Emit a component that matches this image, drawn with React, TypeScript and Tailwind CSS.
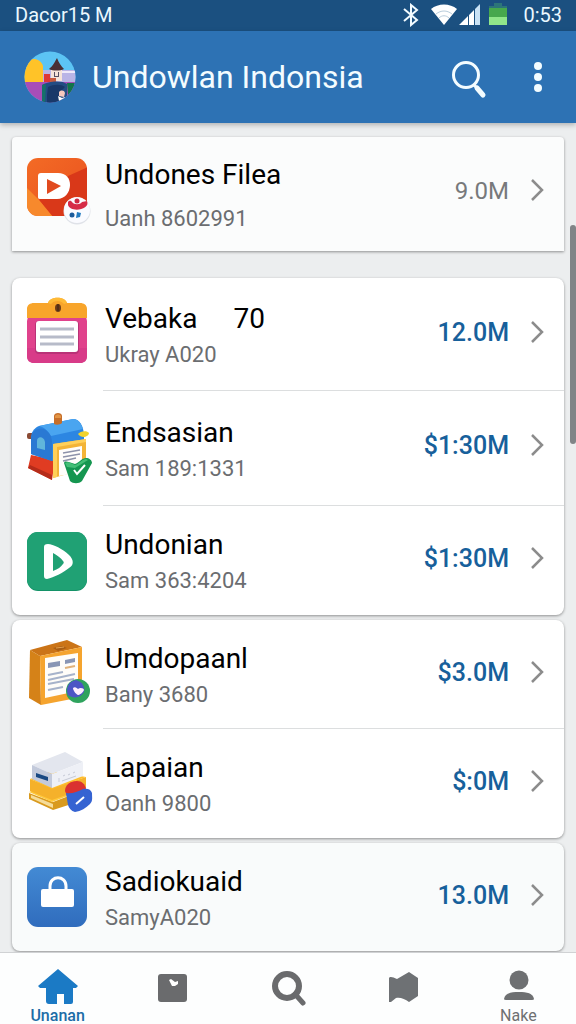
import type { ReactNode } from 'react';

const Avatar = () => (
  <svg viewBox="0 0 52 52" className="h-[52px] w-[52px] shrink-0" aria-hidden="true">
    <defs>
      <clipPath id="avatar-clip">
        <circle cx="26" cy="26" r="25.5" />
      </clipPath>
    </defs>
    <g clipPath="url(#avatar-clip)">
      <rect width="52" height="52" fill="#5cc4f4" />
      <path d="M18 19h34v12H18z" fill="#b9b4e6" />
      <path d="M38 20h14v2H38z" fill="#eee9fa" />
      <rect y="31" width="52" height="21" fill="#a74db8" />
      <path d="M0 31V16C2 6 16 5 19 15v16z" fill="#ffc328" />
      <path d="M27 17h11v13H27z" fill="#f5e4da" />
      <path d="M25 18c4-3 5-6 8-11 2 5 4 8 7 11-4 2-11 2-15 0z" fill="#4a3035" />
      <path d="M30 21h1v4h3v-4h1v5h-5z" fill="#555063" />
      <path d="M20 23h6v8h-6z" fill="#de3737" />
      <path d="M26 27h6v4h-6z" fill="#c65a3f" />
      <path d="M18 34c6-4 20-5 25-1v20H18z" fill="#234c83" />
      <path d="M24 36c6-3 13-3 17 0l-5 5 1 11H23v-8z" fill="#193869" />
      <path d="M18 34l4-1-1 19h-3z" fill="#15706a" />
      <path d="M43 32h9v20H40l4-8z" fill="#12744b" />
      <path d="M35 41c2-2 5-2 6 1l-1 4-5-1z" fill="#f6c8bd" />
      <path d="M34 45l4 2 3-1-1 4h-5z" fill="#fff" />
    </g>
  </svg>
);

const Art = ({ children }: { children: ReactNode }) => (
  <svg viewBox="0 0 72 80" className="h-20 w-[72px] shrink-0" aria-hidden="true">
    {children}
  </svg>
);

const FilesArt = () => (
  <Art>
    <defs>
      <linearGradient id="files-bg" x1="0" y1="0" x2="1" y2="1">
        <stop offset="0" stopColor="#f36b25" />
        <stop offset="1" stopColor="#e9501f" />
      </linearGradient>
      <clipPath id="files-clip">
        <rect x="5" y="4" width="60" height="58" rx="11" />
      </clipPath>
    </defs>
    <g clipPath="url(#files-clip)">
      <rect x="5" y="4" width="60" height="58" fill="url(#files-bg)" />
      <path d="M46 22l20-9v50H31L17 46z" fill="#d93819" />
      <path d="M5 34l12 12 14 17H5z" fill="#f7892c" />
    </g>
    <path d="M19 19h17c8 0 12 5 12 12s-5 14-13 14H18c-2 0-2-1-2-3V22c0-2 1-3 3-3z" fill="#fff" />
    <path d="M25 25l14 7-14 8z" fill="#e14a1f" />
    <circle cx="55" cy="57" r="13.5" fill="#dfe2e8" />
    <circle cx="55" cy="56" r="13" fill="#fafbff" />
    <path d="M46 48c2-2 3-1 4 0 2 3 8 3 10 0l5-1c4 9-17 12-19 4z" fill="#d62c48" />
    <circle cx="55" cy="47" r="2.5" fill="#ce2942" />
    <circle cx="50" cy="61" r="2.5" fill="#1b5b9b" />
    <path d="M55 58l4 1-1 4-4 1z" fill="#237bc0" />
  </Art>
);

const ClipboardArt = () => (
  <Art>
    <rect x="5" y="20" width="60" height="49" rx="7" fill="#e0428c" />
    <path d="M5 54v8c0 5 3 7 7 7h46c4 0 7-2 7-7v-8z" fill="#d83b88" />
    <path d="M5 24V15c0-4 3-6 7-6h14c2-7 17-7 19 0h13c4 0 7 2 7 6v9z" fill="#f8a52b" />
    <path d="M26 9c2-7 17-7 19 0l-3 1c-3-4-10-4-13 0z" fill="#ffba36" />
    <ellipse cx="36" cy="14" rx="3" ry="4" fill="#6d3b18" />
    <path d="M36 10v7" stroke="#3b2515" strokeWidth="1" />
    <rect x="13" y="27" width="44" height="33" rx="4" fill="#b93277" />
    <rect x="14" y="27" width="42" height="31" rx="3" fill="#fff" />
    <path d="M18 35h34M18 43h34M18 50h34" stroke="#b7bbc9" strokeWidth="3" />
  </Art>
);

const MailboxArt = () => (
  <Art>
    <path d="M9 47l-3 13 24 12 3-20z" fill="#e03c22" />
    <path d="M6 60l24 12v-5L8 57z" fill="#b52c1a" />
    <rect x="5" y="25" width="8" height="6" rx="2" fill="#8b4b34" />
    <path d="M9 31c0-7 3-11 8-13l34-7c7 0 10 7 11 15v18l-32 9-21-7z" fill="#2c86e2" />
    <path d="M17 18l34-7c5 0 8 4 10 10l-32 7c-3-5-7-9-12-10z" fill="#4aa5f0" />
    <path d="M9 31c1-15 20-14 21 3v19L9 46z" fill="#2a79d3" />
    <path d="M15 33c0-5 7-5 8 1v8l-8-2z" fill="#60b5db" />
    <path d="M32 8c0-4 8-4 8 0v7c-2 2-6 2-8 1z" fill="#c66e29" />
    <path d="M33 8c1-2 5-2 6 0v2h-6z" fill="#e39545" />
    <path d="M31 36l33-5v30l-33 9z" fill="#f3b437" />
    <path d="M31 36l33-5v3l-29 5v30l-4 1z" fill="#ffd05a" />
    <path d="M37 42l23-4v26l-23 4z" fill="#fffdfa" />
    <path d="M41 45l17-3M41 49l17-3M41 53l13-3" stroke="#8d92a9" strokeWidth="1.5" />
    <path d="M56 26c2-3 9-4 11-1 0 4-8 6-11 1z" fill="#f0d22d" />
    <path d="M42 55c1-3 4-1 11 1 5-2 7-6 11-6 3 0 6 2 6 5L60 73c-3 3-9 3-12 0z" fill="#159650" />
    <path d="M43 55c3-2 6 0 10 2 5-2 8-6 11-6l2 1-13 8-8-1z" fill="#43be75" />
    <path d="M52 62l3 4 8-9" fill="none" stroke="#fff" strokeWidth="2" />
  </Art>
);

const PlayArt = () => (
  <Art>
    <rect x="5" y="12" width="60" height="59" rx="11" fill="#149267" />
    <rect x="5" y="12" width="60" height="58" rx="11" fill="#20a174" />
    <path
      fillRule="evenodd"
      d="M26 24c5 0 15 5 21 11 5 5 5 10 0 13-6 5-15 9-22 11-2 0-3-1-3-3V27c0-2 1-3 4-3zM31 33v18c5-2 8-4 10-7 1-1 1-2 0-3-2-3-6-6-10-8z"
      fill="#fff"
    />
  </Art>
);

const BoxArt = () => (
  <Art>
    <path d="M8 16l37-10 15 7-42 9z" fill="#cb7417" />
    <path d="M8 16l10 6 1 49L7 64z" fill="#d58218" />
    <path d="M18 22l42-9v50l-41 8z" fill="#f5a42e" />
    <path d="M31 14l9-2 5 2-9 3z" fill="#a85e15" />
    <path d="M34 14l8-1" stroke="#e6a14b" />
    <path d="M23 24l33-5v38l-33 7z" fill="#fffdf8" />
    <path d="M26 29l12-2v5l-12 2zM43 26l10-2v4l-10 2z" fill="#8996b4" />
    <path d="M43 34l10-2" stroke="#e0b27a" strokeWidth="2" />
    <path d="M26 41l15-3M26 46l27-6M26 50l26-5M26 56l15-3" stroke="#a7b3ca" strokeWidth="2" />
    <circle cx="56" cy="57" r="12" fill="#2fa35e" />
    <path d="M54 46c-7 1-11 8-8 15 5 4 13 3 16-3 1-5-1-10-8-12z" fill="#4d55c5" />
    <path d="M51 54c2-2 4 0 5 1 2-2 6-1 6 1-1 3-5 5-6 5s-5-4-5-7z" fill="#fff0ff" />
  </Art>
);

const BooksArt = () => (
  <Art>
    <path d="M7 50l24 9 34-13v10L31 67 7 56z" fill="#d99a1e" />
    <path d="M7 49l22-8 35 5-34 13z" fill="#ffc93d" />
    <path d="M9 52l22 9v4L9 55z" fill="#f5dc9a" />
    <path d="M8 36l22 9 34-11v11L30 57 8 48z" fill="#f5b12b" />
    <path d="M8 36l22-8 34 6-34 12z" fill="#ffbd29" />
    <path d="M10 22l33-13 18 10-31 12z" fill="#e3e6ee" />
    <path d="M10 22l20 9v14l-20-9z" fill="#c3cadb" />
    <path d="M30 31l31-12v14L30 45z" fill="#eef0f6" />
    <path d="M14 30l12 4v4l-12-4z" fill="#194983" />
    <path d="M37 35v4M41 33l2-1M46 32l2-1M51 30l2-1M40 38l14-5" stroke="#c6cad6" strokeWidth="1" />
    <path d="M43 48c0-6 5-10 12-10 5 0 8 3 9 8l-19 7z" fill="#da3230" />
    <path d="M44 50c6 1 11-1 17-4 4-1 8 0 9 4 0 5 1 8-2 11-4 4-9 7-15 8-4-1-6-4-7-7z" fill="#3563d2" />
    <path d="M54 61l8-7" fill="none" stroke="#fff" strokeWidth="2" />
  </Art>
);

const BagArt = () => (
  <Art>
    <defs>
      <linearGradient id="bag-bg" x1="0" y1="0" x2="0" y2="1">
        <stop offset="0" stopColor="#438ad4" />
        <stop offset="1" stopColor="#306cbd" />
      </linearGradient>
    </defs>
    <rect x="5" y="10" width="60" height="60" rx="11" fill="url(#bag-bg)" />
    <rect x="19" y="32" width="33" height="18" rx="2" fill="#fff" />
    <path d="M28 33v-4c0-11 16-11 16 0v4" fill="none" stroke="#fff" strokeWidth="3" />
  </Art>
);

type Item = {
  title: string;
  extra?: string;
  sub: string;
  amount: string;
  art: ReactNode;
  height: string;
  muted?: boolean;
};

type Group = { className: string; items: Item[] };

const groups: Group[] = [
  {
    className: 'mb-[27px] rounded-t bg-[#fbfcfc]',
    items: [
      { title: 'Undones Filea', sub: 'Uanh 8602991', amount: '9.0M', art: <FilesArt />, height: 'h-[114px]', muted: true },
    ],
  },
  {
    className: 'mb-[5px] rounded-lg bg-white',
    items: [
      { title: 'Vebaka', extra: '70', sub: 'Ukray A020', amount: '12.0M', art: <ClipboardArt />, height: 'h-28' },
      { title: 'Endsasian', sub: 'Sam 189:1331', amount: '$1:30M', art: <MailboxArt />, height: 'h-[115px]' },
      { title: 'Undonian', sub: 'Sam 363:4204', amount: '$1:30M', art: <PlayArt />, height: 'h-[110px]' },
    ],
  },
  {
    className: 'mb-[5px] rounded-lg bg-white',
    items: [
      { title: 'Umdopaanl', sub: 'Bany 3680', amount: '$3.0M', art: <BoxArt />, height: 'h-[108px]' },
      { title: 'Lapaian', sub: 'Oanh 9800', amount: '$:0M', art: <BooksArt />, height: 'h-[110px]' },
    ],
  },
  {
    className: 'rounded-lg bg-[#f9fbfb]',
    items: [
      { title: 'Sadiokuaid', sub: 'SamyA020', amount: '13.0M', art: <BagArt />, height: 'h-[108px]' },
    ],
  },
];

const Row = ({ item, divided }: { item: Item; divided: boolean }) => (
  <li>
    <button type="button" className={`flex w-full items-center pl-[10px] text-left ${item.height}`}>
      {item.art}
      <span
        className={`ml-[9px] flex h-full min-w-0 flex-1 items-center border-t pr-[19px] ${
          divided ? 'border-[#dcdedf]' : 'border-transparent'
        }`}
      >
        <span className={`flex flex-1 flex-col pl-[2px] ${item.muted ? 'gap-2 pt-1' : 'pt-[5px]'}`}>
          <span className="flex gap-9 text-[28px] leading-9 text-black">
            {item.title}
            {item.extra && <span>{item.extra}</span>}
          </span>
          <span className="text-[22px] leading-9 text-[#6b6d70]">{item.sub}</span>
        </span>
        <span className={`flex items-center ${item.muted ? 'pb-2' : 'pb-1'}`}>
          <span className={item.muted ? 'text-2xl text-[#77797b]' : 'text-[25px] font-medium text-[#17609b]'}>
            {item.amount}
          </span>
          <svg viewBox="0 0 16 24" className="mb-[2px] ml-5 h-6 w-4" fill="none" stroke="#8c8c8c" strokeWidth="2.5" aria-hidden="true">
            <path d="M3 2l10 10L3 22" />
          </svg>
        </span>
      </span>
    </button>
  </li>
);

const StatusBar = () => (
  <div className="flex h-[31px] shrink-0 items-center bg-[#1b5080] pr-[14px] pb-[2px] pl-[15px] text-xl leading-7 text-[#eaf8ff]">
    <span className="flex-1">Dacor15 M</span>
    <svg viewBox="0 0 16 24" className="h-6 w-4" fill="none" stroke="#f2fbff" strokeWidth="2" aria-hidden="true">
      <path d="M1 6l13 11-6 5V2l6 5L1 18" />
    </svg>
    <svg viewBox="0 0 28 22" className="ml-[11px] h-[22px] w-7" aria-hidden="true">
      <path d="M1 5C8-1 20-1 27 5L14 21z" fill="#fff" />
      <path d="M6 10c5-4 11-4 16 0M9 14c3-3 7-3 10 0" fill="none" stroke="#b9cddc" strokeWidth="1" />
    </svg>
    <svg viewBox="0 0 22 22" className="ml-px h-[22px] w-[22px]" aria-hidden="true">
      <path d="M0 21L9 12v9zM10 11l5-5v15h-5z" fill="#fff" />
      <path d="M16 5l5-5v21h-5z" fill="#c9e2f5" />
    </svg>
    <svg viewBox="0 0 18 23" className="ml-2 h-[23px] w-[18px]" aria-hidden="true">
      <path d="M5 0h8v3h5v5H0V3h5z" fill="#2c7579" />
      <path d="M0 5h18v9H0z" fill="#47a84d" />
      <path d="M0 14h18v8H0z" fill="#91e68a" />
    </svg>
    <span className="ml-4">0:53</span>
  </div>
);

const tabs = [
  {
    name: 'Unanan',
    label: true,
    icon: <path d="M20 1l20 17-2 2h-3v14q0 2-2 2h-7V26h-7v10h-8q-3 0-3-3V20H2l-2-2z" fill="#1b7ac5" />,
  },
  {
    name: 'Calendar',
    icon: (
      <>
        <rect x="5" y="6" width="29" height="28" rx="3" fill="#6a6b6d" />
        <path d="M16 12l2-1 4 3 3-1v3l-3 2h-3z" fill="#fff" />
      </>
    ),
  },
  {
    name: 'Search',
    icon: (
      <>
        <circle cx="19" cy="18" r="12" fill="none" stroke="#6a6b6d" strokeWidth="6" />
        <path d="M27 26l8 9" stroke="#6a6b6d" strokeWidth="5" strokeLinecap="round" />
      </>
    ),
  },
  {
    name: 'Map',
    icon: <path d="M6 10c1-2 4-1 8 1L26 4l9 6v18l-9 6c-4-3-9-5-13-4l-5 4H6z" fill="#6e7174" />,
  },
  {
    name: 'Nake',
    label: true,
    icon: (
      <>
        <circle cx="21" cy="12" r="9.5" fill="#6e7072" />
        <path d="M6 31c1-6 7-7 15-7s14 1 15 7q0 1-2 1H8q-2 0-2-1z" fill="#6e7072" />
      </>
    ),
  },
];

const BottomNav = () => (
  <nav className="grid h-[72px] shrink-0 grid-cols-5 overflow-hidden border-t border-[#d0d2d4] bg-[#fdfefe] pt-[15px]">
    {tabs.map((tab, i) => (
      <a
        key={tab.name}
        href={`#${tab.name.toLowerCase()}`}
        aria-label={tab.name}
        className={`flex flex-col items-center text-base leading-5 ${i === 0 ? 'font-medium text-[#1c6da7]' : 'text-[#6e7072]'}`}
      >
        <svg viewBox="0 0 40 38" className="h-[38px] w-10 shrink-0" aria-hidden="true">
          {tab.icon}
        </svg>
        {tab.label && <span>{tab.name}</span>}
      </a>
    ))}
  </nav>
);

const App = () => (
  <div className="flex h-screen flex-col bg-[#eceeef] font-['Roboto','Liberation_Sans',sans-serif]">
    <StatusBar />
    <header className="z-10 flex h-[92px] shrink-0 items-center bg-[#2d72b4] pr-[22px] pl-6 text-[#f3fcff] shadow-[0_2px_5px_rgba(0,0,0,0.25)]">
      <Avatar />
      <h1 className="ml-4 flex-1 text-[32px] leading-10">Undowlan Indonsia</h1>
      <button type="button" aria-label="Search">
        <svg viewBox="0 0 38 40" className="mt-1 h-10 w-[38px]" fill="none" stroke="currentColor" aria-hidden="true">
          <circle cx="16" cy="16" r="12.5" strokeWidth="3" />
          <path d="M24 26l3 3" strokeWidth="3" />
          <path d="M27 29l6 7" strokeWidth="5" strokeLinecap="round" />
        </svg>
      </button>
      <button type="button" aria-label="More options" className="ml-[34px]">
        <svg viewBox="0 0 32 32" className="h-8 w-8" fill="currentColor" aria-hidden="true">
          <circle cx="16" cy="5" r="4" />
          <circle cx="16" cy="16" r="4" />
          <circle cx="16" cy="27" r="4" />
        </svg>
      </button>
    </header>
    <main className="relative min-h-0 flex-1 overflow-hidden px-3 pt-[14px]">
      {groups.map((group) => (
        <ul key={group.items[0].title} className={`shadow-[0_1px_3px_rgba(0,0,0,0.4)] ${group.className}`}>
          {group.items.map((item, i) => (
            <Row key={item.title} item={item} divided={i > 0} />
          ))}
        </ul>
      ))}
      <div className="absolute top-[102px] right-0 h-[219px] w-[6px] rounded-full bg-[#808487]" />
    </main>
    <BottomNav />
  </div>
);

export default App;
